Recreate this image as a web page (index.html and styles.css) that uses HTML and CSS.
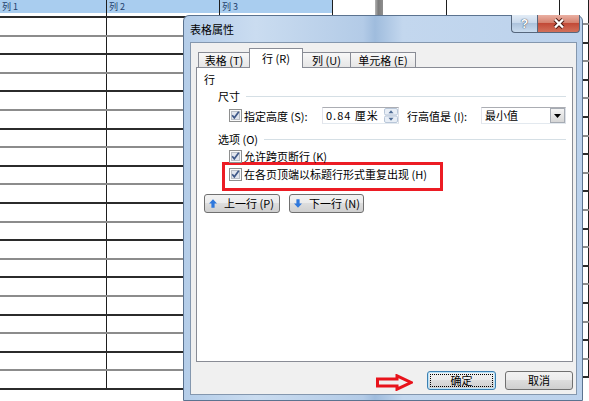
FILE: index.html
```html
<!DOCTYPE html>
<html lang="zh-CN">
<head>
    <meta charset="UTF-8">
    <meta name="viewport" content="width=device-width, initial-scale=1.0">
    <title>表格属性</title>
    <link rel="stylesheet" href="styles.css">
</head>
<body>
    <!-- document behind the dialog -->
    <div class="doc">
        <div class="table">
            <div class="row head"><span>列 1</span><span>列 2</span><span>列 3</span></div>
            <div class="row first"><span></span><span></span><span></span></div>
            <div class="row"><span></span><span></span><span></span></div>
            <div class="row"><span></span><span></span><span></span></div>
            <div class="row"><span></span><span></span><span></span></div>
            <div class="row"><span></span><span></span><span></span></div>
            <div class="row"><span></span><span></span><span></span></div>
            <div class="row"><span></span><span></span><span></span></div>
            <div class="row"><span></span><span></span><span></span></div>
            <div class="row"><span></span><span></span><span></span></div>
            <div class="row"><span></span><span></span><span></span></div>
            <div class="row"><span></span><span></span><span></span></div>
            <div class="row"><span></span><span></span><span></span></div>
            <div class="row"><span></span><span></span><span></span></div>
            <div class="row"><span></span><span></span><span></span></div>
            <div class="row"><span></span><span></span><span></span></div>
            <div class="row"><span></span><span></span><span></span></div>
            <div class="row"><span></span><span></span><span></span></div>
            <div class="row"><span></span><span></span><span></span></div>
            <div class="row"><span></span><span></span><span></span></div>
            <div class="row"><span></span><span></span><span></span></div>
            <div class="row"><span></span><span></span><span></span></div>
        </div>
        <div class="blank"></div>
        <div class="page-gap"></div>
        <div class="blank wide"></div>
        <div class="table second">
            <div class="row first"><span></span><span></span></div>
            <div class="row"><span></span><span></span></div>
            <div class="row"><span></span><span></span></div>
            <div class="row"><span></span><span></span></div>
            <div class="row"><span></span><span></span></div>
            <div class="row"><span></span><span></span></div>
            <div class="row"><span></span><span></span></div>
            <div class="row"><span></span><span></span></div>
            <div class="row"><span></span><span></span></div>
            <div class="row"><span></span><span></span></div>
            <div class="row"><span></span><span></span></div>
            <div class="row"><span></span><span></span></div>
            <div class="row"><span></span><span></span></div>
            <div class="row"><span></span><span></span></div>
            <div class="row"><span></span><span></span></div>
            <div class="row"><span></span><span></span></div>
            <div class="row"><span></span><span></span></div>
            <div class="row"><span></span><span></span></div>
            <div class="row"><span></span><span></span></div>
            <div class="row"><span></span><span></span></div>
        </div>
    </div>

    <div class="dialog">
        <div class="titlebar">
            <span class="title">表格属性</span>
            <div class="caption">
                <span class="cap help">?</span>
                <span class="cap close">
                    <svg width="14" height="11" viewBox="0 0 14 11"><path d="M3 1.5l8 8M11 1.5l-8 8" stroke="#4b1a12" stroke-width="4.2" fill="none"/><path d="M3 1.5l8 8M11 1.5l-8 8" stroke="#fff" stroke-width="2.4" fill="none"/></svg>
                </span>
            </div>
        </div>

        <div class="client">
            <div class="tabs">
                <span class="tab t1">表格 (T)</span>
                <span class="tab active">行 (R)</span>
                <span class="tab t3">列 (U)</span>
                <span class="tab t4">单元格 (E)</span>
            </div>

            <div class="panel">
                <div class="label">行</div>
                <div class="group-head"><span>尺寸</span></div>
                <div class="size-row">
                    <span class="opt height-opt">
                        <svg class="cb" width="13" height="13" viewBox="0 0 13 13"><rect x=".5" y=".5" width="12" height="12" fill="#fafafa" stroke="#8e8f8f"/><rect x="2.5" y="2.5" width="8" height="8" fill="#e2e6ee" stroke="#b9bec6"/><path d="M3.2 6.3l2.1 2.5 4.5-6" fill="none" stroke="#3f5888" stroke-width="1.7"/></svg>
                        指定高度 (S):
                    </span>
                    <div class="spin">
                        <span class="spin-val">0.84 厘米</span>
                        <svg width="14" height="15" viewBox="0 0 14 15"><rect x=".5" y=".5" width="13" height="6.5" rx="1.5" fill="#e8eef6" stroke="#b8c6d8"/><rect x=".5" y="8" width="13" height="6.5" rx="1.5" fill="#e8eef6" stroke="#b8c6d8"/><path d="M7 2.2l2.5 3h-5z" fill="#4e6b94"/><path d="M7 12.7l2.5-3h-5z" fill="#4e6b94"/></svg>
                    </div>
                    <span class="row-kind">行高值是 (I):</span>
                    <div class="combo">
                        <span class="combo-val">最小值</span>
                        <span class="combo-btn"><svg width="7" height="4" viewBox="0 0 7 4"><path d="M0 0h7L3.5 4z" fill="#000"/></svg></span>
                    </div>
                </div>

                <div class="group-head"><span>选项 (O)</span></div>
                <div class="option">
                    <svg class="cb" width="13" height="13" viewBox="0 0 13 13"><rect x=".5" y=".5" width="12" height="12" fill="#fafafa" stroke="#8e8f8f"/><rect x="2.5" y="2.5" width="8" height="8" fill="#e2e6ee" stroke="#b9bec6"/><path d="M3.2 6.3l2.1 2.5 4.5-6" fill="none" stroke="#3f5888" stroke-width="1.7"/></svg>
                    允许跨页断行 (K)
                </div>
                <div class="highlight">
                    <div class="option">
                        <svg class="cb" width="13" height="13" viewBox="0 0 13 13"><rect x=".5" y=".5" width="12" height="12" fill="#fafafa" stroke="#8e8f8f"/><rect x="2.5" y="2.5" width="8" height="8" fill="#e2e6ee" stroke="#b9bec6"/><path d="M3.2 6.3l2.1 2.5 4.5-6" fill="none" stroke="#3f5888" stroke-width="1.7"/></svg>
                        在各页顶端以标题行形式重复出现 (H)
                    </div>
                </div>

                <div class="nav-btns">
                    <button class="btn nav prev">
                        <svg width="8" height="9" viewBox="0 0 8 9"><path d="M4 .3L8 4.5H5.6V8.7H2.4V4.5H0z" fill="#2f78dc"/></svg>
                        上一行 (P)
                    </button>
                    <button class="btn nav next">
                        <svg width="8" height="9" viewBox="0 0 8 9"><path d="M4 8.7L8 4.5H5.6V.3H2.4v4.2H0z" fill="#2f78dc"/></svg>
                        下一行 (N)
                    </button>
                </div>
            </div>

            <div class="footer">
                <svg class="pointer" width="37" height="17" viewBox="0 0 37 17"><path d="M1.5 5H21V1.8L35 8.5 21 15.2V12H1.5z" fill="none" stroke="#e8131b" stroke-width="3"/></svg>
                <button class="btn ok"><span>确定</span></button>
                <button class="btn cancel">取消</button>
            </div>
        </div>
    </div>
</body>
</html>
```

FILE: styles.css
```css
body {
    margin: 0;
    width: 589px;
    height: 401px;
    overflow: hidden;
    position: relative;
    background: #fff;
    font-family: "Noto Sans CJK SC", "Noto Sans", sans-serif;
    font-size: 11px;
    color: #000;
}

/* background document */
.doc {
    display: flex;
    width: 589px;
    height: 401px;
    overflow: hidden;
}

.table {
    width: 333px;
    flex: none;
}

.row {
    display: grid;
    grid-template-columns: 107px 113px 113px;
    height: 16.6px;
    border-bottom: 2px solid #8c8c8c;
}

.row:nth-child(even) {
    border-bottom-color: #2b2b2b;
}

.row span {
    border-right: 1px solid #1e1e1e;
}

.row.head {
    height: 13px;
    border-bottom: 0;
    background: #a9cdef;
}

.row.head span {
    padding-left: 2px;
    font-size: 9px;
    line-height: 13px;
    color: #23406b;
}

.row.first {
    height: 3px;
}

.blank {
    width: 42px;
    flex: none;
}

.blank.wide {
    width: 63px;
}

.page-gap {
    width: 8px;
    flex: none;
    background: linear-gradient(to right, #b5b5b5, #7b7b7b 40%, #8e8e8e);
}

.table.second {
    width: 142px;
    border-left: 1px solid #1e1e1e;
}

.table.second .row {
    grid-template-columns: 113px 29px;
}

.table.second .row.first {
    height: 23px;
}

/* dialog window */
.dialog {
    position: absolute;
    left: 183px;
    top: 15px;
    width: 400px;
    height: 386px;
    box-sizing: border-box;
    border: 1px solid #5b7390;
    border-radius: 6px 6px 0 0;
    padding: 0 5px 5px 6px;
    display: flex;
    flex-direction: column;
    background: linear-gradient(to right, #b4cde9 0%, #cadcf0 18%, #b3cbe7 45%, #9fbcdd 48%, #c3d7ee 55%, #bcd2ec 100%);
}

.titlebar {
    display: flex;
    align-items: flex-start;
    height: 26px;
}

.title {
    flex: 1;
    line-height: 26px;
}

.caption {
    display: flex;
    margin: -1px -3px 0 0;
}

.cap {
    height: 18px;
    box-sizing: border-box;
    border: 1px solid #56677d;
    border-top: 0;
    display: flex;
    align-items: center;
    justify-content: center;
}

.cap.help {
    width: 26px;
    border-right: 0;
    border-radius: 0 0 0 4px;
    background: linear-gradient(#e3ecf6, #c9d9ec 45%, #adc3dc 50%, #cadcef);
    font-family: "Liberation Sans", sans-serif;
    font-weight: bold;
    font-size: 12px;
    color: #fff;
    text-shadow: 0 0 1px #3c4a5c, 0 0 1px #3c4a5c;
}

.cap.close {
    width: 43px;
    border-radius: 0 0 4px 0;
    background: linear-gradient(#eab0a3, #d5826f 45%, #c24a37 50%, #d2705a);
}

.client {
    flex: 1;
    display: flex;
    flex-direction: column;
    background: #f0f0f0;
    border: 1px solid #8497ae;
}

/* tabs */
.tabs {
    display: flex;
    align-items: flex-end;
    height: 19px;
    margin: 5px 0 0 7px;
    position: relative;
    z-index: 1;
}

.tab {
    box-sizing: border-box;
    height: 15px;
    border: 1px solid #898c95;
    border-bottom: 0;
    margin-right: -1px;
    background: linear-gradient(#f8f8f8, #e6e6e6);
    text-align: center;
    line-height: 14px;
    white-space: nowrap;
}

.tab.t1 { width: 52px; }
.tab.t3 { width: 49px; }
.tab.t4 { width: 66px; }

.tab.active {
    width: 54px;
    height: 20px;
    margin-bottom: -1px;
    background: #fff;
    line-height: 18px;
}

.panel {
    flex: 1;
    margin: 0 3px 0 5px;
    background: #fff;
    border: 1px solid #898c95;
    padding: 4px 6px 0 7px;
}

.label {
    height: 14px;
    line-height: 14px;
}

.group-head {
    display: flex;
    align-items: center;
    height: 14px;
    line-height: 14px;
    margin-top: 3px;
    padding-left: 14px;
}

.group-head::after {
    content: "";
    flex: 1;
    height: 1px;
    margin-left: 6px;
    background: #d5dfe5;
}

.group-head + .option {
    margin-top: 3px;
}

.size-row {
    display: flex;
    align-items: center;
    height: 17px;
    margin-top: 4px;
    padding-left: 25px;
}

.size-row + .group-head {
    margin-top: 8px;
}

.opt, .option {
    display: flex;
    align-items: center;
    gap: 2px;
    white-space: nowrap;
}

.cb {
    flex: none;
}

.height-opt {
    width: 93px;
    flex: none;
}

.spin, .combo {
    height: 17px;
    box-sizing: border-box;
    border: 1px solid #abadb3;
    border-color: #abadb3 #dbdfe6 #e3e9ef #e2e3ea;
    background: #fff;
    display: flex;
    flex: none;
}

.spin {
    width: 77px;
}

.spin-val {
    flex: 1;
    padding-left: 3px;
    line-height: 15px;
    letter-spacing: 1px;
}

.row-kind {
    width: 74px;
    margin-left: 8px;
    white-space: nowrap;
    flex: none;
}

.combo {
    width: 85px;
}

.combo-val {
    flex: 1;
    padding-left: 3px;
    line-height: 15px;
}

.combo-btn {
    width: 15px;
    margin: 0 0 0 1px;
    box-sizing: border-box;
    border: 1px solid #a6abb3;
    background: linear-gradient(#f4f4f4, #d6d6d6);
    display: flex;
    align-items: center;
    justify-content: center;
}

.option {
    height: 14px;
    line-height: 14px;
    padding-left: 25px;
}

.highlight {
    width: 221px;
    box-sizing: border-box;
    margin: -1px 0 0 18px;
    border: 3px solid #ec1c24;
    padding: 2px 0 7px 4px;
}

.highlight .option {
    padding-left: 0;
}

/* buttons */
.btn {
    box-sizing: border-box;
    height: 19px;
    padding: 0;
    border: 1px solid #707070;
    border-radius: 3px;
    background: linear-gradient(#f2f2f2 0%, #ebebeb 49%, #dddddd 50%, #cfcfcf 100%);
    font: inherit;
    line-height: 15px;
    color: #000;
}

.nav-btns {
    display: flex;
    gap: 9px;
    margin-top: 3px;
}

.nav {
    display: flex;
    align-items: center;
    gap: 7px;
    padding-left: 4px;
    white-space: nowrap;
}

.nav.prev { width: 76px; }
.nav.next { width: 75px; }

.footer {
    display: flex;
    align-items: center;
    justify-content: flex-end;
    height: 19px;
    margin: 9px 3px 4px 0;
}

.pointer {
    margin: 4px 14px 0 0;
}

.btn.ok {
    width: 69px;
    margin-right: 9px;
    padding: 2px;
    border-color: #3c7fb1;
    box-shadow: inset 0 0 0 1px #b8e3f9;
}

.btn.ok span {
    display: block;
    height: 100%;
    box-sizing: border-box;
    border: 1px dotted #000;
    line-height: 11px;
}

.btn.cancel {
    width: 68px;
}
```
